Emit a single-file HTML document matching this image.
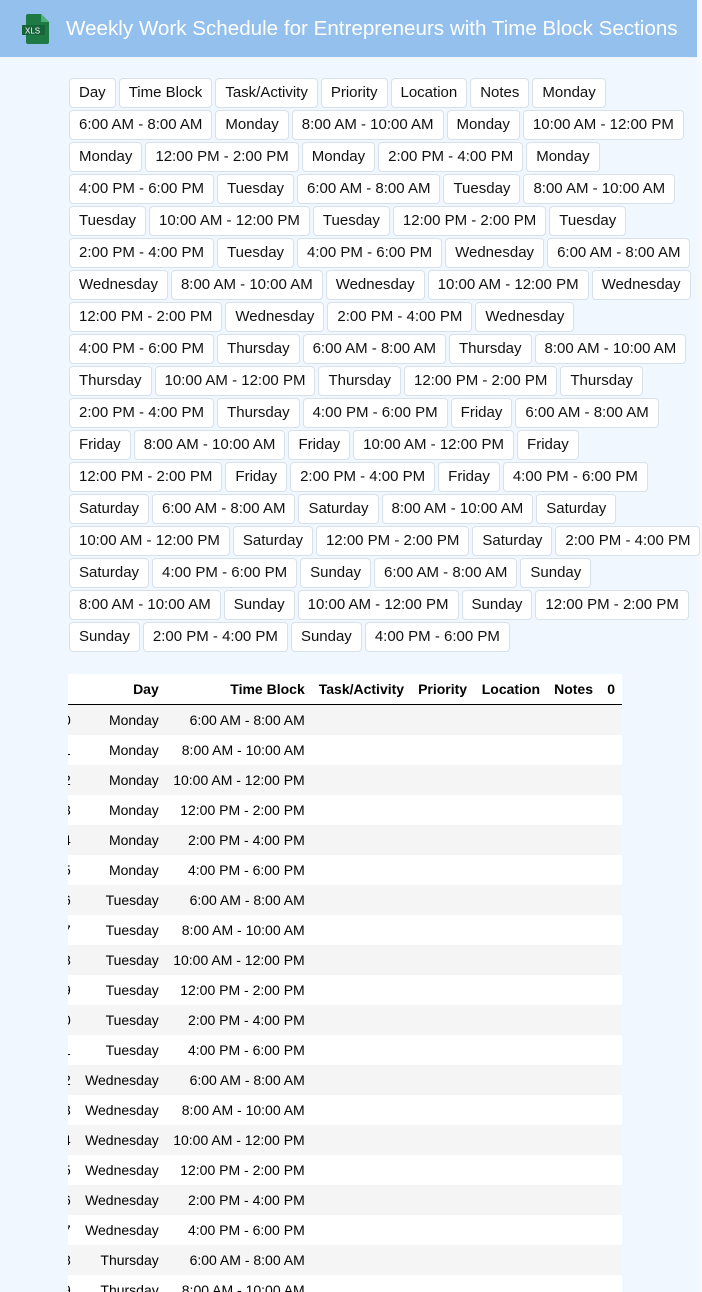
<!DOCTYPE html>
<html><head><meta charset="utf-8"><style>
html,body{margin:0;width:702px;height:1292px;overflow:hidden;}
body{background:#f0f7fe;font-family:"Liberation Sans",Arial,sans-serif;position:relative;}
.hdr{position:absolute;left:0;top:0;width:697px;height:57px;background:#93c0ec;}
.hdr h1{position:absolute;left:66px;top:17px;margin:0;font-size:20.6px;font-weight:normal;color:#fff;white-space:nowrap;}
.side{position:absolute;left:697px;top:0;width:5px;height:1292px;background:#f7f8fa;}
.btns{position:absolute;left:69px;top:78px;width:630px;}
.row{display:flex;gap:3px;height:30px;margin-bottom:2px;}
.b{box-sizing:border-box;height:30px;line-height:28px;padding:0 9px;border:1px solid #d8e0ea;border-radius:4px;background:#fff;font-size:15px;color:#111;white-space:nowrap;}
.tw{position:absolute;left:68px;top:674px;width:554px;height:618px;overflow:hidden;background:#fff;}
table{border-collapse:collapse;margin-left:-30px;table-layout:fixed;font-size:14px;color:#000;}
td,th{padding:0 7px;height:30px;text-align:right;white-space:nowrap;overflow:hidden;}
th{font-weight:bold;height:30px;border-bottom:1px solid #000;}
tbody tr:nth-child(odd){background:#f5f5f5;}
</style></head><body>
<div class="hdr">
<svg style="position:absolute;left:22px;top:14px" width="28" height="30" viewBox="0 0 28 30"><path d="M6 0h13l8 8v20a2 2 0 0 1-2 2H6a2 2 0 0 1-2-2V2a2 2 0 0 1 2-2z" fill="#1e7a45"/><path d="M19 0v8h8z" fill="#4caf74"/><rect x="0" y="11" width="23" height="10" fill="#17643a"/><text x="3" y="19.5" font-size="8" fill="#fff" font-family="Liberation Sans">XLS</text></svg>
<h1>Weekly Work Schedule for Entrepreneurs with Time Block Sections</h1></div>
<div class="side"></div>
<div class="btns" id="btns"></div>
<div class="tw"><table id="t">
<colgroup><col style="width:40px"><col style="width:88px"><col style="width:146px"><col style="width:99px"><col style="width:63px"><col style="width:73px"><col style="width:52px"><col style="width:22px"></colgroup>
<thead><tr><th></th><th>Day</th><th>Time Block</th><th>Task/Activity</th><th>Priority</th><th>Location</th><th>Notes</th><th>0</th></tr></thead>
<tbody id="tb"></tbody></table></div>
<script>
var rows=[["Day","Time Block","Task/Activity","Priority","Location","Notes","Monday"],
["6:00 AM - 8:00 AM","Monday","8:00 AM - 10:00 AM","Monday","10:00 AM - 12:00 PM"],
["Monday","12:00 PM - 2:00 PM","Monday","2:00 PM - 4:00 PM","Monday"],
["4:00 PM - 6:00 PM","Tuesday","6:00 AM - 8:00 AM","Tuesday","8:00 AM - 10:00 AM"],
["Tuesday","10:00 AM - 12:00 PM","Tuesday","12:00 PM - 2:00 PM","Tuesday"],
["2:00 PM - 4:00 PM","Tuesday","4:00 PM - 6:00 PM","Wednesday","6:00 AM - 8:00 AM"],
["Wednesday","8:00 AM - 10:00 AM","Wednesday","10:00 AM - 12:00 PM","Wednesday"],
["12:00 PM - 2:00 PM","Wednesday","2:00 PM - 4:00 PM","Wednesday"],
["4:00 PM - 6:00 PM","Thursday","6:00 AM - 8:00 AM","Thursday","8:00 AM - 10:00 AM"],
["Thursday","10:00 AM - 12:00 PM","Thursday","12:00 PM - 2:00 PM","Thursday"],
["2:00 PM - 4:00 PM","Thursday","4:00 PM - 6:00 PM","Friday","6:00 AM - 8:00 AM"],
["Friday","8:00 AM - 10:00 AM","Friday","10:00 AM - 12:00 PM","Friday"],
["12:00 PM - 2:00 PM","Friday","2:00 PM - 4:00 PM","Friday","4:00 PM - 6:00 PM"],
["Saturday","6:00 AM - 8:00 AM","Saturday","8:00 AM - 10:00 AM","Saturday"],
["10:00 AM - 12:00 PM","Saturday","12:00 PM - 2:00 PM","Saturday","2:00 PM - 4:00 PM"],
["Saturday","4:00 PM - 6:00 PM","Sunday","6:00 AM - 8:00 AM","Sunday"],
["8:00 AM - 10:00 AM","Sunday","10:00 AM - 12:00 PM","Sunday","12:00 PM - 2:00 PM"],
["Sunday","2:00 PM - 4:00 PM","Sunday","4:00 PM - 6:00 PM"]];
var h="";rows.forEach(function(r){h+='<div class="row">'+r.map(function(x){return '<div class="b">'+x+'</div>'}).join("")+'</div>'});
document.getElementById("btns").innerHTML=h;
var days=["Monday","Tuesday","Wednesday","Thursday","Friday","Saturday","Sunday"],
tb=["6:00 AM - 8:00 AM","8:00 AM - 10:00 AM","10:00 AM - 12:00 PM","12:00 PM - 2:00 PM","2:00 PM - 4:00 PM","4:00 PM - 6:00 PM"];
var t="",i=0;days.forEach(function(d){tb.forEach(function(b){t+="<tr><td>"+i+"</td><td>"+d+"</td><td>"+b+"</td><td></td><td></td><td></td><td></td><td></td></tr>";i++;})});
document.getElementById("tb").innerHTML=t;
</script>
</body></html>
